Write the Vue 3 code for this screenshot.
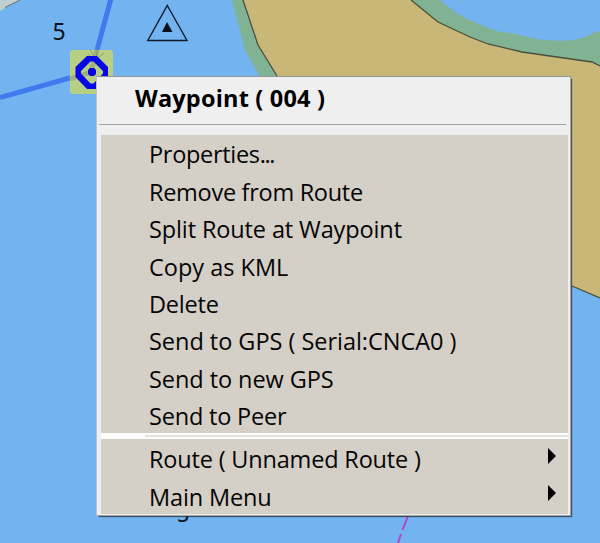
<script setup>
const actions = [
  { label: 'Properties', tail: '...', spacing: -0.3 },
  { label: 'Remove from Route', spacing: -0.29 },
  { label: 'Split Route at Waypoint', spacing: -0.12 },
  { label: 'Copy as KML', spacing: 0 },
  { label: 'Delete', spacing: -0.2 },
  { label: 'Send to GPS ( Serial:CNCA0 )', spacing: -0.03 },
  { label: 'Send to new GPS', spacing: -0.07 },
  { label: 'Send to Peer', spacing: -0.2 },
]
const submenus = [
  { label: 'Route ( Unnamed Route )', spacing: -0.18 },
  { label: 'Main Menu', spacing: -0.15 },
]
</script>

<template>
  <main class="chart">
    <svg class="map" width="600" height="543" viewBox="0 0 600 543">
      <rect width="600" height="543" fill="#73b3f0" />
      <path d="M0 0H20L12 4L0 11Z" fill="#bfd0cf" />
      <path d="M20 0L14 3L5 7.500" fill="none" stroke="#64706f" />
      <path d="M232 0L245 50L260 77L300 120L572 286L600 298V0Z" fill="#82b294" />
      <path d="M243 0L258 45L277 76L330 140L572 286L600 298V66L592 62L522 52L488 44L470 37L438 22L411 0Z" fill="#c9b778" />
      <path d="M243 0L258 45L277 76M572 286L600 298M600 66L592 62L522 52L488 44L470 37L438 22L411 0" fill="none" stroke="#48503c" stroke-width="1.300" />
      <path d="M440 0L455 12L467 19L496 31L516 34L536 39L552 40.500H568Q582 40 593 33L600 31V0Z" fill="#73b3f0" />
      <path d="M408 516L402.500 530M401 534L398 543" stroke="#b446c8" stroke-width="2" />
      <path d="M0 97.500L91 72L112 -5" fill="none" stroke="#3f7bee" stroke-width="5" />
      <rect x="70" y="50" width="43" height="44" rx="3" fill="#b9cf84" />
      <path d="M70 79L91 72L97 50" fill="none" stroke="#a0b080" stroke-width="5" />
      <path d="M90 49L95 59M98 48L96 60M104 53L94 61M88 54L94 59" fill="none" stroke="#788569" stroke-opacity=".65" />
      <path fill-rule="evenodd" d="M87 56H97L108 67V77L97 89H87L75.500 77V67ZM90.500 61.500L81 71V73.500L90.500 83.500H93.500L103 73.500V71L93.500 61.500Z" fill="#0808e6" />
      <path d="M90 68H94L96 70V74L94 76H90L88 74V70Z" fill="#0808e6" />
      <path d="M167.300 5.500L187 40.500H147.800Z" fill="none" stroke="#0d1c2c" stroke-width="1.400" />
      <path d="M167 22L172.500 32H162Z" fill="#07111c" />
      <text x="52.500" y="39.800" class="sounding">5</text>
      <text x="176" y="516" class="sounding">g</text>
    </svg>

    <div class="menu">
      <h1 class="title">Waypoint ( 004 )</h1>
      <div class="rule"></div>
      <ul class="group actions">
        <li v-for="item in actions" :key="item.label">
          <span :style="{ letterSpacing: item.spacing + 'px' }">{{ item.label }}<span v-if="item.tail" class="dots">{{ item.tail }}</span></span>
        </li>
      </ul>
      <div class="separator"></div>
      <ul class="group submenus">
        <li v-for="item in submenus" :key="item.label">
          <span :style="{ letterSpacing: item.spacing + 'px' }">{{ item.label }}</span>
          <svg class="arrow" width="8" height="16" viewBox="0 0 8 16"><path d="M0 0L8 8L0 16Z" /></svg>
        </li>
      </ul>
    </div>
  </main>
</template>

<style>
body { margin: 0; }
</style>

<style scoped>
.chart {
  position: relative;
  width: 600px;
  height: 543px;
  overflow: hidden;
  font-family: "Open Sans", "Noto Sans", sans-serif;
}
.map { display: block; }
.sounding { font-family: "Noto Sans", sans-serif; font-size: 23px; fill: #07111c; }
.menu {
  position: absolute;
  left: 96px;
  top: 76px;
  width: 475px;
  height: 440px;
  box-sizing: border-box;
  padding: 0 2px 1px 4px;
  border: 1px solid #a5a5a5;
  border-left-color: #b9c4d0;
  border-top-color: #92989a;
  background: #f0efef;
  box-shadow: 2px 2px 1px -1px rgba(40, 50, 55, .75);
}
.title {
  margin: 0;
  height: 47px;
  padding-left: 34px;
  font-size: 23.500px;
  font-weight: 700;
  line-height: 42px;
  letter-spacing: .19px;
  white-space: pre;
  color: #000;
}
.rule { height: 1px; margin: 0 2px 10px -2px; background: #a2a2a2; }
.group { margin: 0; padding: 0; list-style: none; background: #d4cfc7; }
.group li {
  display: flex;
  align-items: center;
  justify-content: space-between;
  box-sizing: border-box;
  height: 37.350px;
  padding: 3px 12px 0 48px;
  font-size: 23.500px;
  line-height: 34px;
  white-space: pre;
  color: #050505;
}
.actions li { padding-top: 1.600px; }
.dots { letter-spacing: -1.4px; }
.actions { height: 298px; }
.submenus { height: 75px; }
.separator {
  height: 6px;
  background:
    linear-gradient(#e4e2df, #e4e2df) 44px 2px / 100% 2px no-repeat,
    #fdfcfb;
}
.arrow { margin-bottom: 7px; fill: #000; }
</style>
